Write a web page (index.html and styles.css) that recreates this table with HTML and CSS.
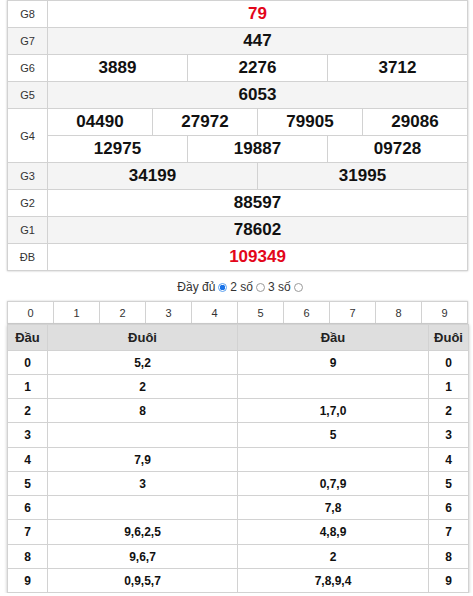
FILE: index.html
```html
<!DOCTYPE html>
<html lang="vi">
<head>
<meta charset="utf-8">
<title>XSMB</title>
<link rel="stylesheet" href="styles.css">
</head>
<body>
<div class="wrap">
  <table class="kq">
    <colgroup>
      <col class="c-label">
      <col span="12">
    </colgroup>
    <tbody>
      <tr><td class="lbl">G8</td><td colspan="12" class="num red">79</td></tr>
      <tr class="alt"><td class="lbl">G7</td><td colspan="12" class="num">447</td></tr>
      <tr><td class="lbl">G6</td><td colspan="4" class="num">3889</td><td colspan="4" class="num">2276</td><td colspan="4" class="num">3712</td></tr>
      <tr class="alt"><td class="lbl">G5</td><td colspan="12" class="num">6053</td></tr>
      <tr><td class="lbl" rowspan="2">G4</td><td colspan="3" class="num">04490</td><td colspan="3" class="num">27972</td><td colspan="3" class="num">79905</td><td colspan="3" class="num">29086</td></tr>
      <tr><td colspan="4" class="num">12975</td><td colspan="4" class="num">19887</td><td colspan="4" class="num">09728</td></tr>
      <tr class="alt"><td class="lbl">G3</td><td colspan="6" class="num">34199</td><td colspan="6" class="num">31995</td></tr>
      <tr><td class="lbl">G2</td><td colspan="12" class="num">88597</td></tr>
      <tr class="alt"><td class="lbl">G1</td><td colspan="12" class="num">78602</td></tr>
      <tr><td class="lbl">ĐB</td><td colspan="12" class="num red big">109349</td></tr>
    </tbody>
  </table>

  <div class="opts">
    <span>Đầy đủ</span><span class="radio on"></span><span>2 số</span><span class="radio"></span><span>3 số</span><span class="radio"></span>
  </div>

  <table class="digits">
    <tbody>
      <tr><td>0</td><td>1</td><td>2</td><td>3</td><td>4</td><td>5</td><td>6</td><td>7</td><td>8</td><td>9</td></tr>
    </tbody>
  </table>

  <table class="loto">
    <colgroup>
      <col class="c-head">
      <col class="c-mid">
      <col class="c-mid2">
      <col class="c-head">
    </colgroup>
    <thead>
      <tr><th>Đầu</th><th>Đuôi</th><th>Đầu</th><th>Đuôi</th></tr>
    </thead>
    <tbody>
      <tr><td class="k">0</td><td>5,2</td><td>9</td><td class="k">0</td></tr>
      <tr><td class="k">1</td><td>2</td><td></td><td class="k">1</td></tr>
      <tr><td class="k">2</td><td>8</td><td>1,7,0</td><td class="k">2</td></tr>
      <tr><td class="k">3</td><td></td><td>5</td><td class="k">3</td></tr>
      <tr><td class="k">4</td><td>7,9</td><td></td><td class="k">4</td></tr>
      <tr><td class="k">5</td><td>3</td><td>0,7,9</td><td class="k">5</td></tr>
      <tr><td class="k">6</td><td></td><td>7,8</td><td class="k">6</td></tr>
      <tr><td class="k">7</td><td>9,6,2,5</td><td>4,8,9</td><td class="k">7</td></tr>
      <tr><td class="k">8</td><td>9,6,7</td><td>2</td><td class="k">8</td></tr>
      <tr><td class="k">9</td><td>0,9,5,7</td><td>7,8,9,4</td><td class="k">9</td></tr>
    </tbody>
  </table>
</div>
</body>
</html>
```

FILE: styles.css
```css
* { box-sizing: border-box; }
html, body { margin: 0; padding: 0; background: #fff; }
body {
  font-family: "Liberation Sans", Arial, sans-serif;
  color: #222;
}
.wrap {
  width: 461px;
  margin-left: 7px;
}
table {
  width: 461px;
  border-collapse: collapse;
  table-layout: fixed;
}
td, th {
  border: 1px solid #d2d2d2;
  text-align: center;
  padding: 0;
}
.kq {
  box-shadow: 0 0 2px rgba(0,0,0,0.25);
}
.kq .c-label { width: 40px; }
.kq tr { height: 27px; }
.kq .alt td { background: #f4f4f4; }
.kq .lbl {
  font-size: 11px;
  color: #333;
  background: #fff;
}
.kq .alt .lbl { background: #f4f4f4; }
.kq .num {
  font-size: 17px;
  font-weight: bold;
  color: #111;
}
.kq .red { color: #e3061a; }

.opts {
  height: 30px;
  display: flex;
  align-items: center;
  justify-content: center;
  font-size: 12px;
  color: #333;
  padding-top: 2px;
  padding-left: 8px;
}
.radio {
  display: inline-block;
  width: 9px;
  height: 9px;
  border-radius: 50%;
  border: 1px solid #9a9a9a;
  margin: 0 3px 0 3px;
  background: #fff;
}
.radio.on {
  border: 1px solid #5aa0f0;
  background: radial-gradient(circle, #1a73e8 0 2.6px, #fff 3px);
}

.digits {
  box-shadow: 0 0 2px rgba(0,0,0,0.2);
}
.digits tr { height: 22px; }
.digits td {
  font-size: 11px;
  color: #333;
}

.loto {
  box-shadow: 0 1px 3px rgba(0,0,0,0.25);
}
.loto .c-head { width: 40px; }
.loto .c-mid { width: 190px; }
.loto .c-mid2 { width: 191px; }
.loto thead tr { height: 26px; }
.loto th {
  background: #dedede;
  font-size: 13px;
  font-weight: bold;
  color: #222;
}
.loto tbody tr { height: 24px; }
.loto tbody tr:nth-child(4n) { height: 25px; }
.loto td {
  font-size: 12px;
  font-weight: bold;
  color: #111;
}
```
